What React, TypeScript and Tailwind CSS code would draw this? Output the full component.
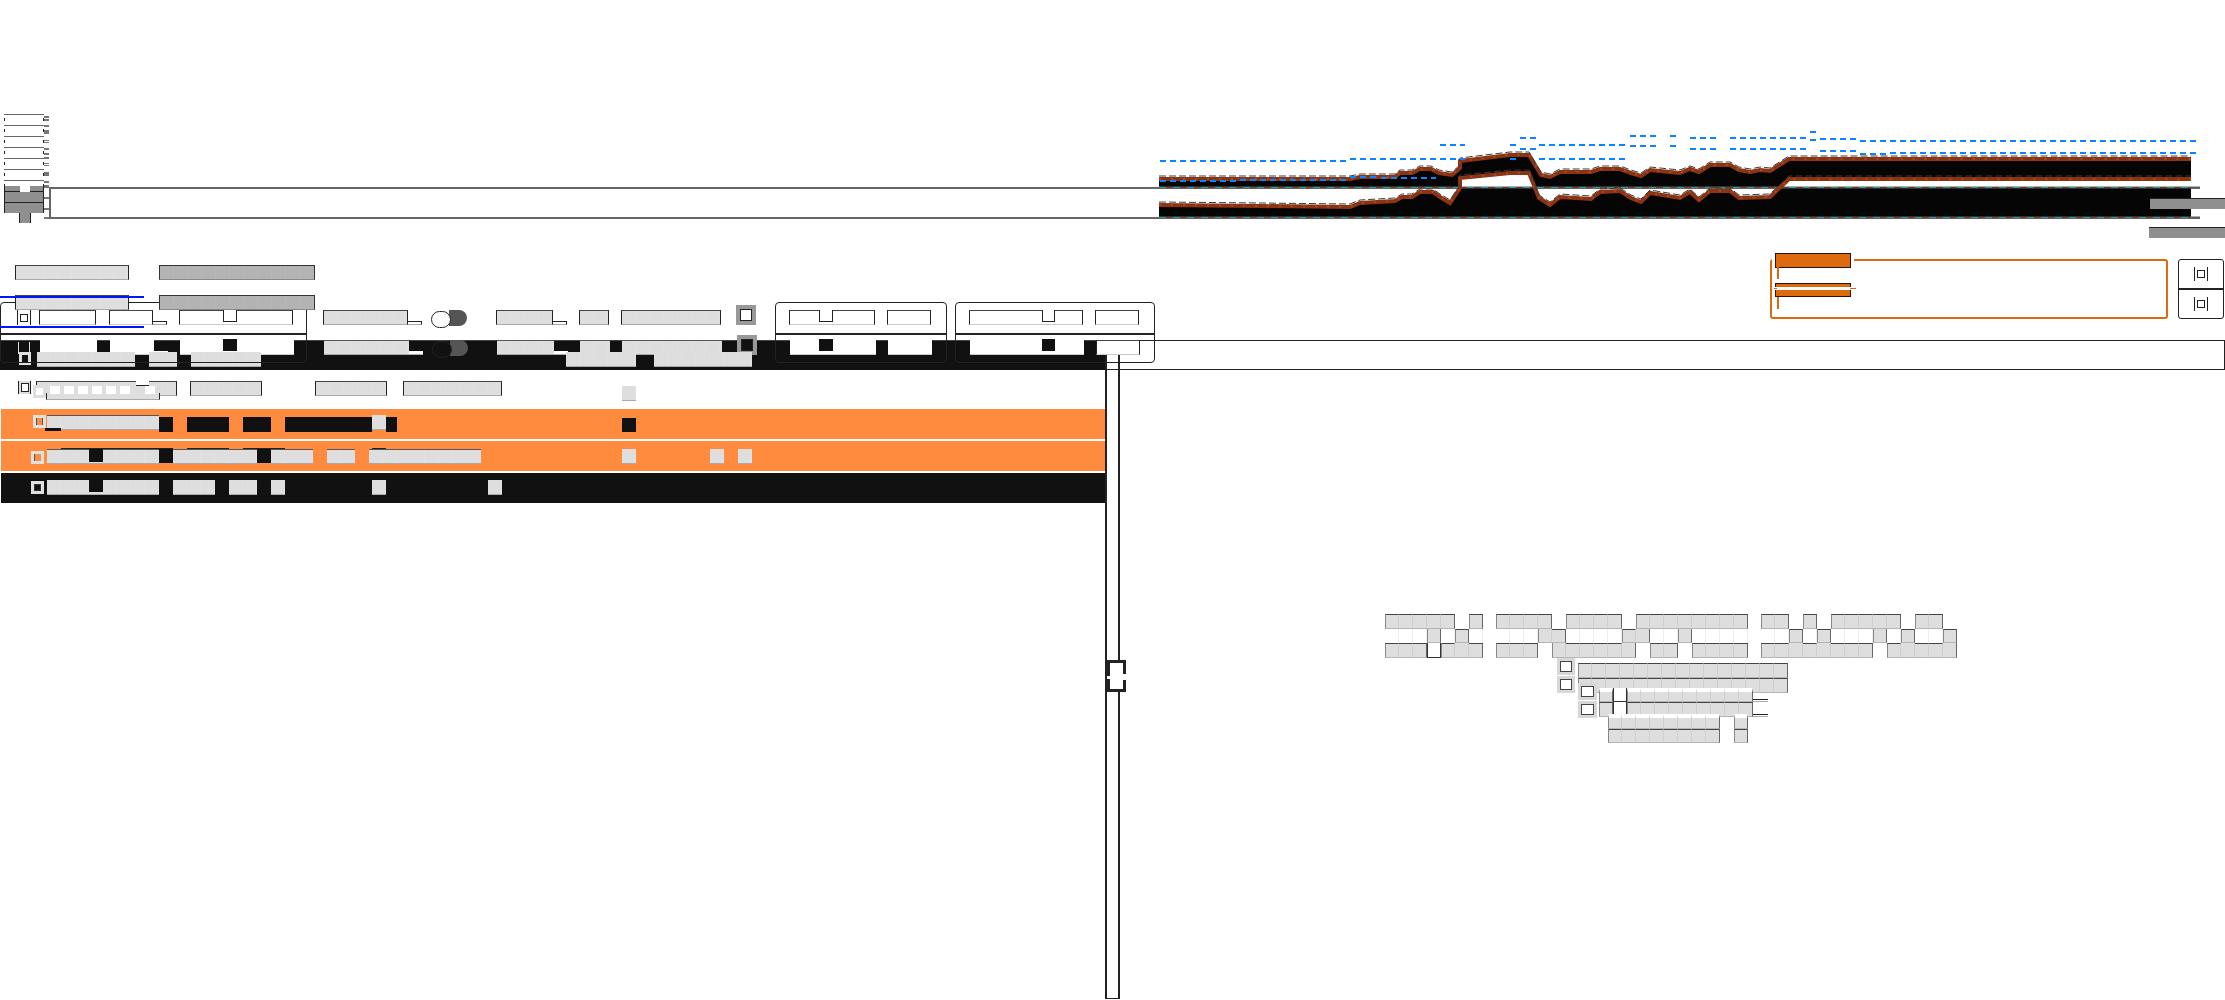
import React from "react";

const tones = {
  light:
    "border border-x-[#222] border-t-[#444] border-b-[#aaa] bg-[repeating-linear-gradient(90deg,#dedede_0,#dedede_13px,#e1e1e1_13px,#e1e1e1_14px)]",
  flat: "border-t border-b border-t-[#555] border-b-[#aaa] bg-[repeating-linear-gradient(90deg,#dedede_0,#dedede_13px,#e1e1e1_13px,#e1e1e1_14px)]",
  white: "border border-x-[#222] border-t-[#444] border-b-[#ccc] bg-white",
  paper: "border-b border-b-[#ccc] bg-white",
  dim: "border border-x-[#333] border-t-[#333] border-b-[#888] bg-[repeating-linear-gradient(90deg,#b3b3b3_0,#b3b3b3_13px,#b7b7b7_13px,#b7b7b7_14px)]",
};

function Tofu({
  className,
  tone = "light",
  notch,
}: {
  className: string;
  tone?: keyof typeof tones;
  notch?: string;
}) {
  return (
    <div className={`relative shrink-0 h-[15px] ${tones[tone]} ${className}`}>
      {notch && <div className={`absolute -top-px ${notch}`} />}
    </div>
  );
}

function Tail({ dark }: { dark?: boolean }) {
  return (
    <div
      className={`shrink-0 w-[14px] h-[4px] mt-[11px] border-b border-b-[#aaa] ${
        dark ? "bg-white" : "border-t border-r border-t-[#222] border-r-[#222]"
      }`}
    />
  );
}

function Glyph({ className = "" }: { className?: string }) {
  return (
    <div className={`shrink-0 w-[14px] h-[15px] flex items-center justify-center border-x border-[#222] ${className}`}>
      <div className="w-[8px] h-[8px] border border-[#222]" />
    </div>
  );
}

function Check({ className, inner }: { className: string; inner: string }) {
  return (
    <div className={`shrink-0 border-[3px] border-[#e0e0e0] ${className}`}>
      <div className={`w-full h-full ${inner}`} />
    </div>
  );
}

function Toggle({ dark }: { dark?: boolean }) {
  return (
    <div className="shrink-0 ml-[9px] flex">
      <div className={`relative w-[20px] h-[17px] mt-px rounded-full border border-[#222] ${dark ? "bg-[#111]" : "bg-white"}`} />
      <div className="-ml-[2px] w-[18px] h-[16px] rounded-r-full bg-[#555]" />
    </div>
  );
}

function GrayBox({ dark }: { dark?: boolean }) {
  return (
    <div className="shrink-0 ml-[15px] -mt-[5px] w-[20px] h-[20px] border-[4px] border-[#999] relative">
      <div className={`w-full h-full border border-[#222] ${dark ? "bg-[#111]" : "bg-white"}`} />
    </div>
  );
}

// same row is painted twice, once on the white strip and once inside the black bar
function ToolRow({ dark }: { dark?: boolean }) {
  const clean = dark ? "paper" : "white";
  const notchBg = dark ? "bg-[#111]" : "bg-white border-x border-b border-[#222]";
  return (
    <div className={`flex items-start h-[15px] ${dark ? "-mt-px" : ""}`}>
      {dark ? (
        <div className="shrink-0 ml-[18px] w-[12px] h-[12px] mt-[2px] border-x border-[#ddd] bg-[#111]" />
      ) : (
        <Glyph className="ml-[17px]" />
      )}
      <Tofu tone={clean} className={`w-[57px] ${dark ? "ml-[10px]" : "ml-[8px]"}`} />
      <Tofu tone={clean} className="w-[44px] ml-[13px]" />
      <Tail dark={dark} />
      <Tofu tone={clean} className="w-[114px] ml-[12px]" notch={`left-[43px] w-[14px] h-[12px] ${notchBg}`} />
      <Tofu tone={dark ? "flat" : "light"} className="w-[85px] ml-[30px]" />
      <Tail dark={dark} />
      <Toggle dark={dark} />
      <Tofu tone={dark ? "flat" : "light"} className="w-[57px] ml-[29px]" />
      <Tail dark={dark} />
      <Tofu tone={dark ? "flat" : "light"} className="w-[30px] ml-[12px]" />
      <Tofu tone={dark ? "flat" : "light"} className="w-[100px] ml-[12px]" />
      <GrayBox dark={dark} />
      <Tofu tone={clean} className="w-[86px] ml-[33px]" notch={`left-[29px] w-[14px] h-[12px] ${notchBg}`} />
      <Tofu tone={clean} className="w-[44px] ml-[12px]" />
      <Tofu tone={clean} className="w-[114px] ml-[38px]" notch={`left-[72px] w-[13px] h-[12px] ${notchBg}`} />
      <Tofu tone="white" className="w-[44px] ml-[12px]" />
    </div>
  );
}

const upper =
  "1159,179 1350,179 1360,177 1395,177 1400,173 1412,173 1420,169 1431,169 1439,173 1452,175 1460,168 1460,161 1510,155 1529,155 1541,175 1550,177 1560,172 1591,172 1600,169 1620,169 1631,173 1641,176 1650,170 1670,172 1680,173 1690,169 1699,172 1710,165 1730,165 1739,170 1750,172 1760,170 1770,171 1789,159 2191,159";
const lower =
  "1159,205 1260,206 1350,207 1360,203 1395,201 1402,197 1412,197 1420,192 1433,192 1440,197 1450,203 1460,188 1460,178 1510,173 1529,173 1539,198 1550,205 1560,197 1591,199 1600,192 1620,191 1631,198 1641,202 1650,193 1680,198 1690,192 1699,200 1710,191 1730,191 1739,198 1770,197 1789,179 2191,179";

const blueDashes = [
  [1160, 1347, 161], [1350, 1465, 159], [1440, 1465, 145], [1160, 1236, 181], [1240, 1347, 180],
  [1350, 1376, 177], [1381, 1436, 178], [1510, 1516, 145], [1510, 1516, 159], [1520, 1536, 138],
  [1520, 1536, 149], [1539, 1625, 145], [1539, 1625, 159], [1630, 1656, 136], [1630, 1656, 146],
  [1670, 1676, 136], [1670, 1676, 146], [1690, 1716, 138], [1730, 1806, 138], [1690, 1716, 149],
  [1730, 1806, 149], [1810, 1816, 132], [1810, 1816, 140], [1820, 1856, 139], [1820, 1856, 151],
  [1860, 2196, 141], [1860, 1886, 154], [1890, 2196, 153],
];

function Chart() {
  return (
    <svg className="absolute left-[1150px] top-[125px]" width="1060" height="100" viewBox="1150 125 1060 100">
      <defs>
        <clipPath id="aboveBase">
          <rect x="1150" y="125" width="1060" height="62" />
        </clipPath>
        <clipPath id="belowBase">
          <rect x="1150" y="188" width="1060" height="30" />
        </clipPath>
      </defs>
      <polygon points={`${upper} 2191,187 1159,187`} fill="#050505" />
      <polygon points={`${lower} 2191,187 1159,187`} fill="#fff" clipPath="url(#aboveBase)" />
      <polygon points={`${lower} 2191,217 1159,217`} fill="#050505" clipPath="url(#belowBase)" />
      {[187.5, 217.5].map((y) => (
        <g key={y}>
          <line x1="1159" x2="2200" y1={y} y2={y} stroke="#5f5f5f" strokeWidth="2" />
          <line x1="1159" x2="2190" y1={y} y2={y} stroke="#17a2a8" strokeWidth="1" strokeDasharray="7 7" />
          <line x1="1166" x2="2190" y1={y} y2={y} stroke="#7a3a22" strokeWidth="1" strokeDasharray="7 7" />
        </g>
      ))}
      {[upper, lower].map((points) => (
        <g key={points} fill="none">
          <polyline points={points} stroke="#8a3414" strokeWidth="4" />
          <polyline points={points} stroke="#b8441a" strokeWidth="2" strokeDasharray="2 10" />
          <polyline points={points} stroke="#3a3a3a" strokeWidth="1" strokeDasharray="7 3" transform="translate(0 -3)" />
        </g>
      ))}
      {blueDashes.map(([a, b, y]) => (
        <line key={`${a}-${y}`} x1={a} x2={b} y1={y} y2={y} stroke="#0a84ff" strokeWidth="2" strokeDasharray="6 4" />
      ))}
    </svg>
  );
}

const ticks = [
  "mt-[2px] h-[2px]", "mt-[1px] h-[2px]", "mt-[4px] h-[2px]", "mt-[3px] h-[4px]",
  "mt-[6px] h-px", "mt-px h-px", "mt-[5px] h-[2px]", "mt-[3px] h-[2px]", "mt-[2px] h-[2px]",
  "mt-[4px] h-px", "mt-px h-px", "mt-[6px] h-[4px]", "mt-[5px] h-[2px]", "mt-[2px] h-[3px]",
  "mt-[9px] h-[2px]", "mt-[9px] h-[2px]", "mt-[7px] h-[2px]",
];

function Axis() {
  const segments = ["h-[11px]", "h-[11px]", "h-[11px]", "h-[11px]", "h-[11px]", "h-[11px]", "h-[6px]"];
  return (
    <div className="flex shrink-0 ml-1">
      <div className="w-[40px]">
        {segments.map((h, i) => (
          <div key={i} className={`${h} border-t border-[#666] flex justify-between`}>
            <div className="w-px h-[3px] mt-[3px] bg-[#222]" />
            <div className="w-px h-[3px] mt-[3px] bg-[#222]" />
          </div>
        ))}
        <div className="relative h-[27px] pt-[5px] bg-[#8f8f8f] border-x border-[#222]">
          <div className="absolute left-[15px] top-0 w-[10px] h-[6px] bg-white" />
          <div className="h-[12px] border-y border-[#222]" />
        </div>
        <div className="ml-[15px] w-[12px] h-[10px] bg-[#8f8f8f] border-x border-[#222]" />
      </div>
      <div className="w-[5px]">
        {ticks.map((t, i) => (
          <div key={i} className={`${t} bg-[#777]`} />
        ))}
      </div>
    </div>
  );
}

function OrangeBox() {
  return (
    <div className="relative w-[398px] h-[60px] border-2 border-[#de6a0e] rounded-[3px]">
      <div className="absolute left-0 -top-[2px] w-[82px] h-[2px] bg-white" />
      <div className="absolute left-[3px] -top-[8px] w-[76px] h-[15px] bg-[#de6a0e] border border-[#2a1405]" />
      <div className="absolute left-[5px] top-[6px] w-[2px] h-[12px] bg-[#de6a0e]" />
      <div className="absolute left-[3px] top-[22px] w-[76px] h-[14px] bg-[#de6a0e] border border-[#2a1405]" />
      <div className="absolute left-0 top-[26px] w-[84px] h-[3px] bg-white" />
      <div className="absolute left-[2px] top-[27px] w-[82px] h-[1px] bg-[linear-gradient(90deg,#de6a0e_3px,transparent_3px,transparent_76px,#de6a0e_76px)]" />
      <div className="absolute left-[5px] top-[36px] w-[2px] h-[12px] bg-[#de6a0e]" />
    </div>
  );
}

function IconButtons() {
  return (
    <div className="ml-[10px] w-[46px] h-[60px] flex flex-col border border-[#222] rounded-[3px]">
      <div className="flex-1 flex items-center justify-center border-b-2 border-[#222]">
        <Glyph className="!h-[14px]" />
      </div>
      <div className="flex-1 flex items-center justify-center">
        <Glyph className="!h-[14px]" />
      </div>
    </div>
  );
}

function Card({ className }: { className: string }) {
  return (
    <div className={`absolute top-[49px] h-[61px] border border-[#222] rounded-[4px] ${className}`}>
      <div className="mt-[30px] h-[2px] bg-[#222]" />
    </div>
  );
}

function TableRows() {
  const darkNotch = "left-[42px] w-[14px] h-[13px] bg-[#111]";
  return (
    <div className="ml-px">
      {/* header row, with a second ghost layer on top of it */}
      <div className="relative h-[39px] pt-[11px] flex items-start -ml-px">
        <div className="ml-[18px] w-[13px] h-[13px] bg-[#dedede] border-x border-[#222] flex items-center justify-center">
          <div className="w-[8px] h-[9px] border border-[#222] bg-white" />
        </div>
        <Tofu className="w-[141px] ml-[5px]" notch="left-[99px] w-[13px] h-[5px] bg-white border-x-0 border-b border-[#222]" />
        <Tofu className="w-[72px] ml-[13px]" />
        <Tofu className="w-[72px] ml-[53px]" />
        <Tofu className="w-[99px] ml-[16px]" />
        <Tofu tone="flat" className="w-[14px] ml-[120px] mt-[5px] border-t-0" />
        <div className="absolute left-[46px] top-[23px] w-[114px] h-[7px] bg-[#dedede] border-x border-b border-x-[#222] border-b-[#aaa]" />
        <div className="absolute left-[36px] top-[16px] flex gap-[4px]">
          {[0, 1, 2, 3, 4, 5, 6].map((i) => (
            <div key={i} className="w-[10px] h-[8px] bg-white" />
          ))}
          <div className="ml-[11px] w-[10px] h-[8px] bg-white" />
        </div>
        <div className="absolute left-[33px] top-[15px] w-[13px] h-[13px] border-[3px] border-[#dedede] bg-white" />
      </div>

      <div className="relative h-[30px] mb-[2px] bg-[#ff8c3e] flex items-start pt-[6px]">
        <Check className="ml-[32px] w-[13px] h-[13px]" inner="bg-[#ff8c3e] border-x border-[#555]" />
        <Tofu tone="flat" className="ml-px w-[112px] border-t-[#444]" />
        <div className="mt-[2px] w-[14px] h-[15px] bg-[#111]" />
        <div className="ml-[14px] mt-[2px] w-[42px] h-[15px] bg-[#111]" />
        <div className="ml-[14px] mt-[2px] w-[28px] h-[15px] bg-[#111]" />
        <div className="ml-[14px] mt-[2px] w-[87px] h-[15px] bg-[#111]" />
        <Tofu tone="flat" className="w-[14px] border-t-0" />
        <div className="mt-[2px] w-[11px] h-[15px] bg-[#111]" />
        <div className="ml-[225px] mt-[3px] w-[14px] h-[14px] bg-[#111]" />
        <div className="absolute left-[44px] top-[19px] w-[16px] h-[3px] bg-[#111]" />
      </div>

      <div className="relative h-[30px] mb-[2px] bg-[#ff8c3e] flex items-start pt-[8px]">
        <Check className="ml-[30px] mt-[2px] w-[13px] h-[13px]" inner="bg-[#ff8c3e] border-l border-[#555]" />
        <Tofu tone="flat" className="ml-[3px] w-[112px]" notch={darkNotch} />
        <div className="w-[14px] h-[14px] bg-[#111]" />
        <Tofu tone="flat" className="w-[84px]" />
        <div className="w-[14px] h-[14px] bg-[#111]" />
        <Tofu tone="flat" className="w-[42px]" />
        <Tofu tone="flat" className="ml-[14px] w-[28px]" />
        <Tofu tone="flat" className="ml-[14px] w-[112px]" />
        <Tofu tone="flat" className="ml-[141px] w-[14px] border-t-0" />
        <Tofu tone="flat" className="ml-[74px] w-[14px] border-t-0" />
        <Tofu tone="flat" className="ml-[14px] w-[14px] border-t-0" />
        <div className="absolute left-[60px] top-[7px] w-[112px] h-px bg-[#222]" />
        <div className="absolute left-[186px] top-[7px] w-[42px] h-px bg-[#222]" />
        <div className="absolute left-[242px] top-[7px] w-[42px] h-px bg-[#222]" />
        <div className="absolute left-[371px] top-[7px] w-[14px] h-px bg-[#222]" />
      </div>

      <div className="h-[30px] bg-[#111] flex items-start pt-[7px]">
        <Check className="ml-[30px] mt-px w-[13px] h-[13px]" inner="bg-[#111] border border-[#333]" />
        <Tofu tone="flat" className="ml-[3px] w-[112px] border-t-0" notch={darkNotch} />
        <Tofu tone="flat" className="ml-[14px] w-[42px] border-t-0" />
        <Tofu tone="flat" className="ml-[14px] w-[28px] border-t-0" />
        <Tofu tone="flat" className="ml-[14px] w-[14px] border-t-0" />
        <Tofu tone="flat" className="ml-[87px] w-[14px] border-t-0" />
        <Tofu tone="flat" className="ml-[102px] w-[14px] border-t-0" />
      </div>
    </div>
  );
}

function Scrollbar() {
  return (
    <div className="relative z-20 shrink-0 w-[15px] h-[644px] -mt-[15px] border-x-2 border-b border-[#222]">
      <div className="absolute left-0 top-[305px] w-[19px] h-[32px] border-[3px] border-[#222] bg-white">
        <div className="absolute -left-[3px] top-[13px] w-[3px] h-[3px] bg-white" />
        <div className="absolute -right-[3px] top-[11px] w-[3px] h-[6px] bg-white" />
      </div>
    </div>
  );
}

function Cells({
  pattern,
  above,
  className,
  wash,
}: {
  pattern: string;
  above?: string;
  className: string;
  wash?: boolean;
}) {
  const chars = pattern.split("");
  return (
    <div className={`flex ${className}`}>
      {chars.map((c, i) => {
        if (c === "|") return <div key={i} className="w-[13px]" />;
        if (c === "x") return <div key={i} className="w-[14px]" />;
        if (c === "w") return <div key={i} className="w-[14px] bg-white border-r border-r-[#eee]" />;
        if (c === "b" || c === "n") return <div key={i} className="w-[14px] bg-white border-x border-b border-[#333]" />;
        const roofless = above !== undefined && above[i] === "g";
        const edgeL = chars[i - 1] !== "g";
        const edgeR = chars[i + 1] !== "g";
        return (
          <div
            key={i}
            className={`w-[14px] bg-[#dedede] border-b border-b-[#b5b5b5] border-r ${
              edgeR ? "border-r-[#666]" : "border-r-[#cfcfcf]"
            } ${edgeL ? "border-l border-l-[#888]" : ""} ${
              wash ? "border-t-[4px] border-t-white" : roofless ? "" : "border-t border-t-[#444]"
            }`}
          />
        );
      })}
    </div>
  );
}

function MiniCheck() {
  return (
    <div className="w-full h-[17px] border-[3px] border-[#d8d8d8] bg-[#d8d8d8]">
      <div className="w-full h-full bg-white border border-[#444]" />
    </div>
  );
}

function Tail2() {
  return <div className="w-[15px] h-[3px] mt-auto border-t border-[#222] border-b border-b-[#aaa]" />;
}

function EmptyState() {
  const one = "gggggxg|ggggxggggxgggggggg|ggxgxgggggxggx";
  const two = "wwwgwgw|wwwggwwwwggwwgwwww|wwgwgwwwgwgwwg";
  const three = "gggbggg|gggxggggggxggxgggg|ggggggggxggggg";
  const wide = "ggggggggggggggg";
  return (
    <div className="flex flex-col items-center">
      <div className="mr-[3px]">
        <Cells pattern={one} className="h-[15px]" />
        <Cells pattern={two} above={one} className="h-[14px]" />
        <Cells pattern={three} above={two} className="h-[15px]" />
      </div>
      <div className="flex">
        <div className="w-[18px] flex flex-col gap-px mr-[3px]">
          <MiniCheck />
          <MiniCheck />
        </div>
        <div className="pt-[5px]">
          <Cells pattern={wide} className="h-[15px]" />
          <Cells pattern={wide} className="h-[15px]" />
        </div>
      </div>
      <div className="flex -mt-[10px] relative">
        <div className="w-[19px] flex flex-col gap-px mr-[2px]">
          <MiniCheck />
          <MiniCheck />
        </div>
        <div className="pt-[5px]">
          <div className="flex h-[14px]">
            <Cells pattern="gnggggggggg" wash className="h-[14px]" />
            <Tail2 />
          </div>
          <div className="flex h-[15px]">
            <Cells pattern="gnggggggggg" className="h-[15px]" />
            <Tail2 />
          </div>
        </div>
      </div>
      <div className="ml-[10px] -mt-[4px] relative">
        <Cells pattern="ggggggggxg" wash className="h-[15px]" />
        <Cells pattern="ggggggggxg" className="h-[14px]" />
      </div>
    </div>
  );
}

export default function App() {
  return (
    <div className="relative w-[2225px] h-[1000px] overflow-hidden bg-white font-['Liberation_Sans',sans-serif]">
      <section className="relative h-[253px] pt-[114px] flex items-start">
        <Axis />
        <div className="shrink-0 mt-[73px] w-[2151px] h-[32px] border-y-2 border-l-2 border-[#666]" />
        <Chart />
        <div className="absolute left-[2150px] top-[198px] w-[75px] h-[11px] bg-[#8f8f8f] border-t border-[#222]" />
        <div className="absolute left-[2149px] top-[227px] w-[76px] h-[11px] bg-[#8f8f8f] border-t border-[#222]" />
      </section>

      <section className="relative z-10 h-[87px] flex justify-between">
        <div>
          <div className="relative z-10 pt-[12px] pl-[15px] flex">
            <Tofu className="w-[114px]" />
            <Tofu tone="dim" className="w-[156px] ml-[30px]" />
          </div>
          <div className="relative z-10 pt-[15px] pl-[15px] flex">
            <Tofu className="w-[114px]" />
            <Tofu tone="dim" className="w-[156px] ml-[30px]" />
          </div>
          <ToolRow />
        </div>
        <div className="pt-[6px] pr-px flex items-start">
          <OrangeBox />
          <IconButtons />
        </div>
        <Card className="left-0 w-[307px]" />
        <Card className="left-[775px] w-[172px]" />
        <Card className="left-[955px] w-[200px]" />
        <div className="absolute left-0 top-[43px] z-20 w-[144px] h-[2px] bg-[#0018f5]" />
        <div className="absolute left-0 top-[73px] z-20 w-[144px] h-[2px] bg-[#0018f5]" />
      </section>

      <section className="relative h-[30px] border border-[#222]">
        <div className="-ml-px -mt-px w-[1107px] h-[30px] bg-[#111] border-t border-[#444]">
          <ToolRow dark />
          <div className="flex items-start -mt-[3px]">
            <Check className="ml-[19px] w-[12px] h-[13px]" inner="bg-[#111]" />
            <Tofu tone="flat" className="w-[98px] ml-[6px] h-[14px] border-t-0" />
            <Tofu tone="flat" className="w-[28px] ml-[14px] h-[14px] border-t-0" />
            <Tofu tone="flat" className="w-[70px] ml-[14px] h-[14px] border-t-0" />
            <Tofu tone="flat" className="w-[70px] ml-[305px] h-[14px] border-t-0" />
            <Tofu tone="flat" className="w-[98px] ml-[18px] h-[14px] border-t-0" />
          </div>
        </div>
      </section>

      <main className="flex h-[630px]">
        <div className="w-[1105px] shrink-0">
          <TableRows />
        </div>
        <Scrollbar />
        <div className="flex-1 flex items-center justify-center pb-[14px]">
          <EmptyState />
        </div>
      </main>
    </div>
  );
}
